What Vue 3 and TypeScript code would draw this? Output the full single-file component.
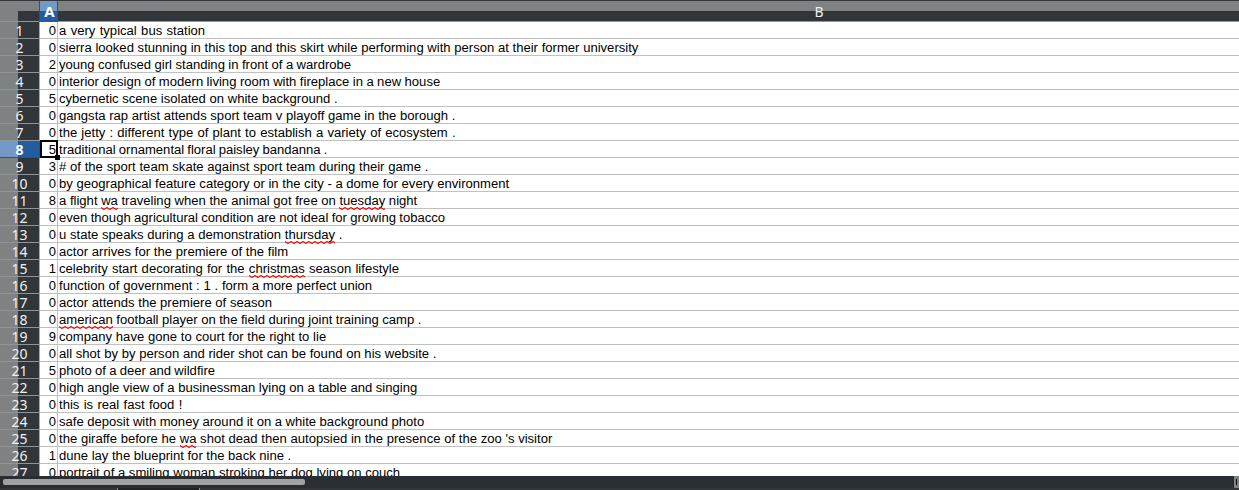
<script setup lang="ts">
interface Row {
  count: number
  text: string
  width: number
  misspelled?: string[]
}

// `width` is the rendered length of the sentence in pixels
const rows: Row[] = [
  { count: 0, text: 'a very typical bus station', width: 146 },
  { count: 0, text: 'sierra looked stunning in this top and this skirt while performing with person at their former university', width: 579 },
  { count: 2, text: 'young confused girl standing in front of a wardrobe', width: 292 },
  { count: 0, text: 'interior design of modern living room with fireplace in a new house', width: 381 },
  { count: 5, text: 'cybernetic scene isolated on white background .', width: 278.4 },
  { count: 0, text: 'gangsta rap artist attends sport team v playoff game in the borough .', width: 396.2 },
  { count: 0, text: 'the jetty : different type of plant to establish a variety of ecosystem .', width: 396.2 },
  { count: 5, text: 'traditional ornamental floral paisley bandanna .', width: 268.2 },
  { count: 3, text: '# of the sport team skate against sport team during their game .', width: 369.2 },
  { count: 0, text: 'by geographical feature category or in the city - a dome for every environment', width: 450 },
  { count: 8, text: 'a flight wa traveling when the animal got free on tuesday night', width: 358, misspelled: ['wa', 'tuesday'] },
  { count: 0, text: 'even though agricultural condition are not ideal for growing tobacco', width: 386 },
  { count: 0, text: 'u state speaks during a demonstration thursday .', width: 283.2, misspelled: ['thursday'] },
  { count: 0, text: 'actor arrives for the premiere of the film', width: 229 },
  { count: 1, text: 'celebrity start decorating for the christmas season lifestyle', width: 340, misspelled: ['christmas'] },
  { count: 0, text: 'function of government : 1 . form a more perfect union', width: 313 },
  { count: 0, text: 'actor attends the premiere of season', width: 213 },
  { count: 0, text: 'american football player on the field during joint training camp .', width: 362.2, misspelled: ['american'] },
  { count: 9, text: 'company have gone to court for the right to lie', width: 267 },
  { count: 0, text: 'all shot by by person and rider shot can be found on his website .', width: 377.2 },
  { count: 5, text: 'photo of a deer and wildfire', width: 156 },
  { count: 0, text: 'high angle view of a businessman lying on a table and singing', width: 358 },
  { count: 0, text: 'this is real fast food !', width: 123.2 },
  { count: 0, text: 'safe deposit with money around it on a white background photo', width: 365 },
  { count: 0, text: "the giraffe before he wa shot dead then autopsied in the presence of the zoo 's visitor", width: 493, misspelled: ['wa'] },
  { count: 1, text: 'dune lay the blueprint for the back nine .', width: 232.2 },
  { count: 0, text: 'portrait of a smiling woman stroking her dog lying on couch', width: 341 },
]

const selected = 7

const FONT_SIZE = 13.08
const ctx = document.createElement('canvas').getContext('2d')!
ctx.font = `${FONT_SIZE}px "Liberation Sans"`

function spacing(row: Row): string {
  const natural = ctx.measureText(row.text).width
  const gaps = row.text.split(' ').length - 1
  return `${((row.width - natural) / gaps).toFixed(4)}px`
}

function parts(row: Row) {
  return row.text.split(/( )/).map((text) => ({ text, bad: row.misspelled?.includes(text) ?? false }))
}

const zigzag = 'M0 .5' + Array.from({ length: 20 }, (_, i) => `L${i * 6 + 3} 2.5L${i * 6 + 6} .5`).join('')
</script>

<template>
  <div class="window">
    <div class="columns">
      <div class="corner"></div>
      <div class="col-a">A</div>
      <div class="col-b">B</div>
    </div>
    <div class="grid">
      <div v-for="(row, i) in rows" :key="i" class="row">
        <div class="row-head" :class="{ active: i === selected }">{{ i + 1 }}</div>
        <div class="cell-a">
          {{ row.count }}
          <div v-if="i === selected" class="cursor"><i class="handle"></i></div>
        </div>
        <div class="cell-b"><span class="sentence" :style="{ wordSpacing: spacing(row) }"><span
          v-for="(part, p) in parts(row)" :key="p" :class="{ bad: part.bad }">{{ part.text }}<svg
            v-if="part.bad" class="wave" height="3"><path :d="zigzag" /></svg></span></span></div>
      </div>
    </div>
    <div class="scroll">
      <div class="thumb"></div>
      <div class="splitter"><i></i></div>
    </div>
    <div class="tabs"><div class="tab"></div></div>
  </div>
</template>

<style>
body {
  overflow: hidden;
}
</style>

<style scoped>
.window {
  width: 1239px;
  height: 490px;
  display: flex;
  flex-direction: column;
  overflow: hidden;
  background: #fff;
  font-family: "Liberation Sans", Arial, sans-serif;
}
.columns {
  display: flex;
  box-sizing: border-box;
  height: 22px;
  flex: none;
  border-top: 1px solid #33383b;
  color: #eff0f1;
  font: 14px/21px "Noto Sans", sans-serif;
  text-align: center;
}
.corner {
  width: 39px;
  box-sizing: border-box;
  border-bottom: 1px solid #929595;
  background: linear-gradient(#31363b, #31363b) 18px 10px no-repeat, #7f8282;
}
.col-a {
  width: 19px;
  box-sizing: border-box;
  border-left: 1px solid #1d5596;
  border-right: 1px solid #1d5596;
  background: linear-gradient(#739ac6 10px, #235d9f 10px);
  color: #fff;
  font-size: 15px;
  font-weight: bold;
  line-height: 21px;
  padding-left: 2px;
}
.col-b {
  flex: 1;
  box-sizing: border-box;
  padding-left: 341px;
  border-bottom: 1px solid #929595;
  background: linear-gradient(#7f8282 10px, #31363b 10px);
  line-height: 22px;
}
.grid {
  height: 454px;
  flex: none;
  overflow: hidden;
}
.row {
  display: flex;
  height: 17px;
}
.row-head {
  width: 40px;
  box-sizing: border-box;
  border-right: 1px solid #a5a8a8;
  border-bottom: 1px solid #929595;
  background: linear-gradient(90deg, #7f8282 18px, #31363b 18px);
  color: #eff0f1;
  font: 14px/18px "Noto Sans", sans-serif;
  text-align: center;
}
.row-head.active {
  border-color: #1d5596;
  background: linear-gradient(90deg, #739ac6 18px, #235d9f 18px);
  color: #fff;
  font-weight: bold;
}
.cell-a {
  position: relative;
  width: 18px;
  box-sizing: border-box;
  padding-right: 1px;
  border-right: 1px solid #c0c0c0;
  border-bottom: 1px solid #c0c0c0;
  color: #000;
  font-size: 13px;
  line-height: 17px;
  text-align: right;
}
.cell-b {
  flex: 1;
  padding-left: 1px;
  border-bottom: 1px solid #c0c0c0;
  color: #000;
  font-size: 13.08px;
  line-height: 17px;
  white-space: pre;
}
.bad {
  position: relative;
}
.wave {
  position: absolute;
  z-index: 1;
  left: 0;
  bottom: -2px;
  width: 100%;
  fill: none;
  stroke: #f00;
  stroke-width: 1.1;
}
.cursor {
  position: absolute;
  z-index: 1;
  left: 0;
  top: -1px;
  width: 14px;
  height: 14px;
  border: 2px solid #000;
}
.handle {
  position: absolute;
  right: -4px;
  bottom: -4px;
  width: 5px;
  height: 5px;
  background: #000;
}
.scroll {
  display: flex;
  align-items: center;
  height: 12px;
  flex: none;
  background: #2a2e32;
}
.thumb {
  width: 302px;
  height: 6px;
  margin-left: 3px;
  border-radius: 2px;
  background: #a1a2a2;
}
.splitter {
  display: flex;
  width: 5px;
  height: 12px;
  box-sizing: border-box;
  margin-left: auto;
  padding: 3px 2px;
  background: #7f8282;
}
.splitter i {
  width: 1px;
  height: 6px;
  background: #000;
}
.tabs {
  height: 2px;
  flex: none;
  background: #31363b;
}
.tab {
  width: 81px;
  height: 2px;
  margin-left: 117px;
  border-left: 1px solid #8b8e90;
  border-right: 1px solid #8b8e90;
  background: #202428;
}
</style>
